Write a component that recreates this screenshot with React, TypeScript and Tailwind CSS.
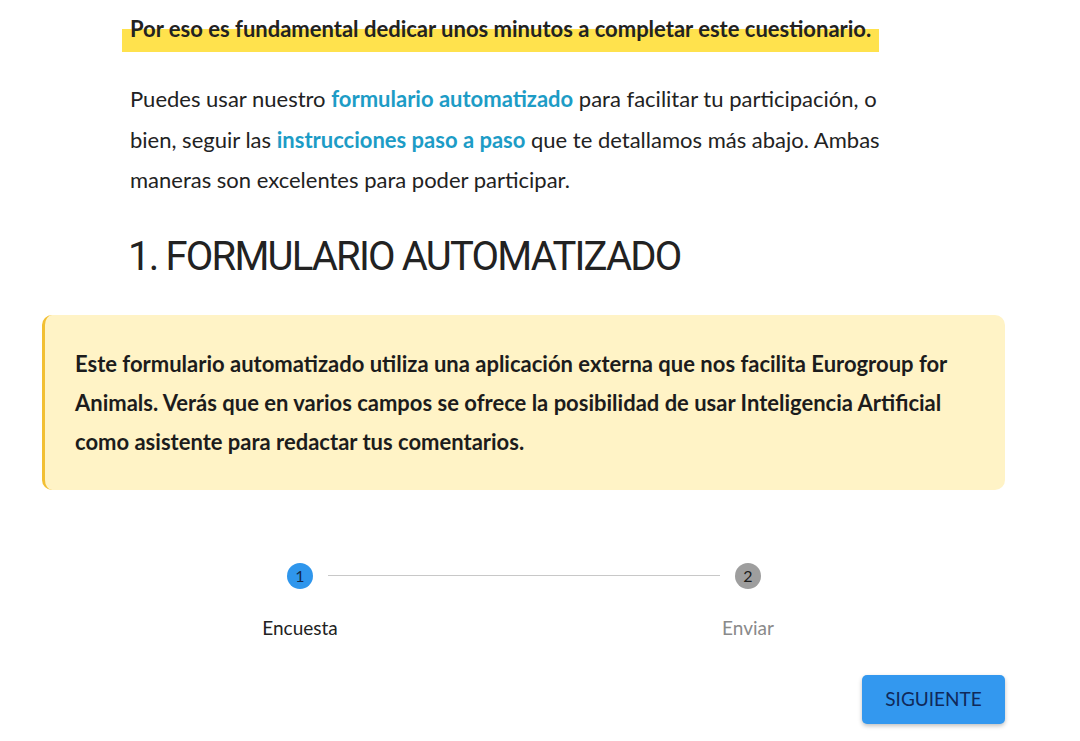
import React from 'react';

const lato = { fontFamily: 'Lato, "Open Sans", sans-serif' };

const Link: React.FC<{ children: React.ReactNode }> = ({ children }) => (
  <a href="#" className="font-bold text-[#1d9cc6]">
    {children}
  </a>
);

export default function App() {
  return (
    <div className="w-[1080px] h-[741px] bg-white overflow-hidden text-[#222]" style={lato}>
      <div className="ml-[42px] w-[963px]">
        <div className="ml-[80px] pt-[14px]">
          <span className="block w-fit px-2 pb-[8px] text-[22px] leading-[30px] font-bold bg-[linear-gradient(transparent_40%,#ffe24d_40%)]">
            Por eso es fundamental dedicar unos minutos a completar este cuestionario.
          </span>
        </div>

        <p className="ml-[88px] mt-[27px] w-[775px] text-[22px] leading-[40.5px]">
          Puedes usar nuestro <Link>formulario automatizado</Link> para facilitar tu participación, o bien,
          seguir las <Link>instrucciones paso a paso</Link> que te detallamos más abajo. Ambas maneras son
          excelentes para poder participar.
        </p>

        <h2
          className="ml-[86px] mt-[32px] text-[40px] leading-[48px] font-normal tracking-[-1.8px] text-[#222]"
          style={{ fontFamily: 'Roboto, sans-serif' }}
        >
          1. FORMULARIO AUTOMATIZADO
        </h2>

        <div className="mt-[34px] h-[175px] rounded-[10px] border-l-[3px] border-[#f2bf33] bg-[#fff3c6] pl-[30px] pr-[40px] pt-[29px]">
          <p className="text-[22px] leading-[39px] font-bold text-[#1c1c1c]">
            Este formulario automatizado utiliza una aplicación externa que nos facilita Eurogroup for Animals.
            Verás que en varios campos se ofrece la posibilidad de usar Inteligencia Artificial como asistente
            para redactar tus comentarios.
          </p>
        </div>

        <div className="mt-[73px]">
          <div className="flex items-center pl-[245px]">
            <div className="w-[26px] h-[26px] rounded-full bg-[#2f96ec] flex items-center justify-center text-[16px] text-[#13294b]">
              1
            </div>
            <div className="mx-[15px] w-[392px] h-px bg-[#c8c8c8]" />
            <div className="w-[26px] h-[26px] rounded-full bg-[#9e9e9e] flex items-center justify-center text-[16px] text-[#1c1c1c]">
              2
            </div>
          </div>
          <div className="flex pl-[208px] mt-[26px] text-[19px] leading-[26px]">
            <div className="w-[100px] text-center text-[#222]">Encuesta</div>
            <div className="ml-[348px] w-[100px] text-center text-[#8a8a8a]">Enviar</div>
          </div>
        </div>

        <div className="flex justify-end mt-[34px]">
          <button className="w-[143px] h-[49px] rounded-[5px] bg-[#3398ef] text-[19px] text-[#10295a] shadow-[0_2px_4px_rgba(0,0,0,0.25)]">
            SIGUIENTE
          </button>
        </div>
      </div>
    </div>
  );
}
